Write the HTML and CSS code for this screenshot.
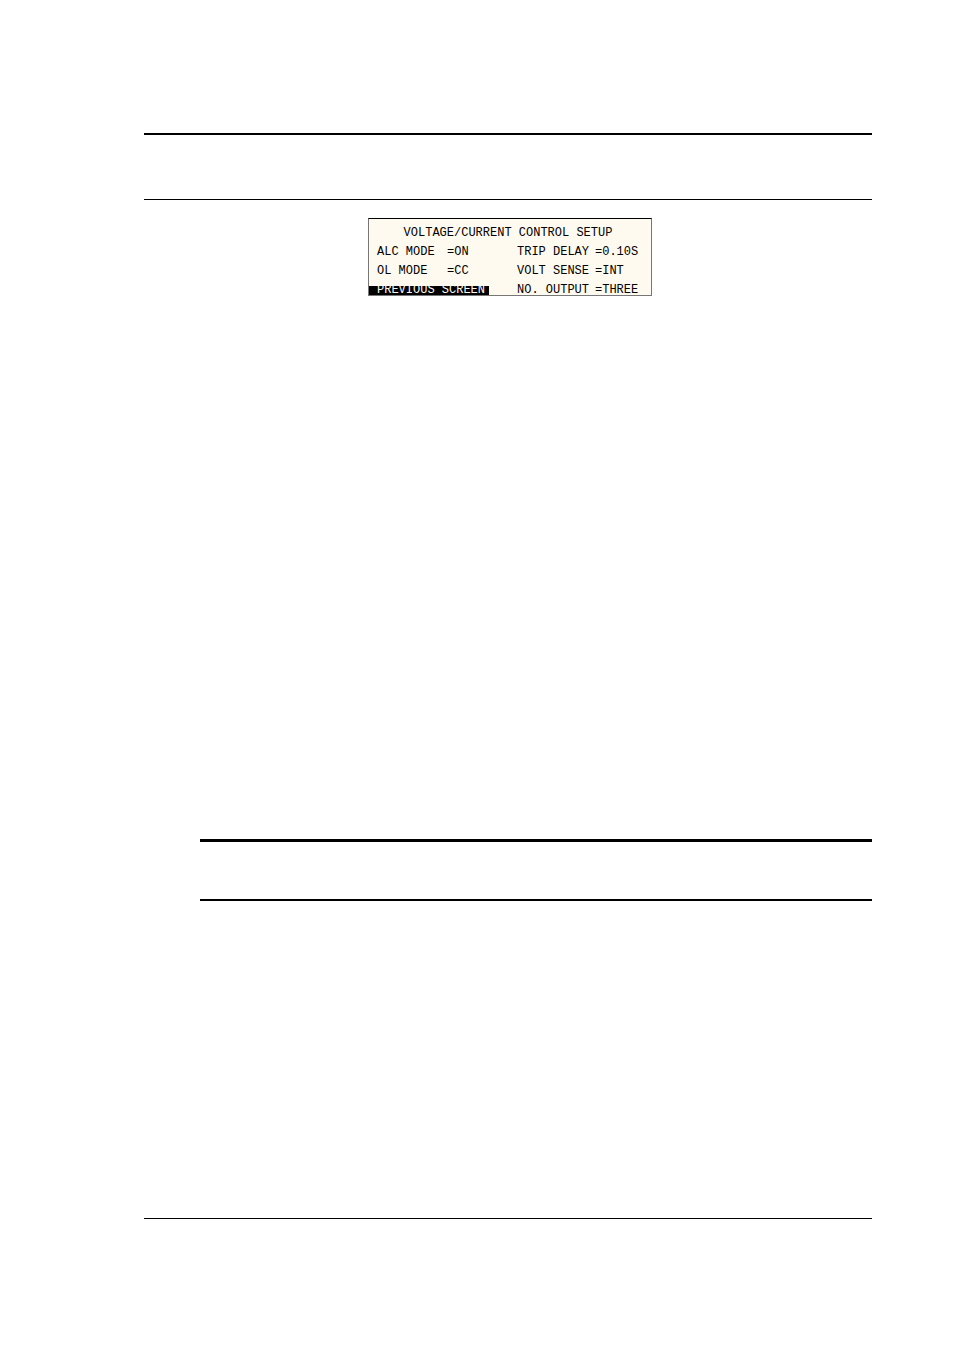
FILE: index.html
```html
<!DOCTYPE html>
<html lang="en">
<head>
<meta charset="utf-8">
<meta name="viewport" content="width=device-width, initial-scale=1">
<title>Voltage/Current Control Setup</title>
<link rel="stylesheet" href="styles.css">
</head>
<body>
<main class="page">
  <header class="masthead"></header>
  <section class="content">
    <div class="lcd">
      <h1 class="lcd-title">VOLTAGE/CURRENT CONTROL SETUP</h1>
      <div class="lcd-row">
        <span>ALC MODE</span><span>=ON</span><span>TRIP DELAY</span><span>=0.10S</span>
      </div>
      <div class="lcd-row">
        <span>OL MODE</span><span>=CC</span><span>VOLT SENSE</span><span>=INT</span>
      </div>
      <div class="lcd-row lcd-last">
        <button class="lcd-button" type="button">PREVIOUS SCREEN</button><span>NO. OUTPUT</span><span>=THREE</span>
      </div>
    </div>
  </section>
  <section class="note"></section>
  <footer class="footer"></footer>
</main>
</body>
</html>
```
FILE: styles.css
```css
* {
  box-sizing: border-box;
}

body {
  margin: 0;
  background: #fff;
  color: #000;
  font-family: "Liberation Mono", monospace;
}

.page {
  padding: 133px 82px 0 144px;
}

.masthead {
  min-height: 67px;
  border-top: 2px solid #000;
  border-bottom: 1px solid #000;
}

.content {
  min-height: 639px;
  padding: 18px 0 0 4px;
}

.lcd {
  width: 284px;
  margin: 0 auto;
  padding-top: 5px;
  border: 1px solid #777;
  border-top-color: #000;
  background: #fffaf0;
  font-size: 12px;
  line-height: 19px;
  white-space: nowrap;
}

.lcd-title {
  margin: 0;
  padding-right: 4px;
  font-size: 12px;
  font-weight: 400;
  text-align: center;
}

.lcd-row {
  display: grid;
  grid-template-columns: 70px 70px 78px 1fr;
  padding-left: 8px;
}

.lcd-last {
  margin-top: 5px;
  line-height: 9px;
}

.lcd-button {
  grid-column: span 2;
  justify-self: start;
  width: 120px;
  height: 9px;
  margin: 0 0 0 -8px;
  padding: 0 0 0 8px;
  border: 0;
  background: #000;
  color: #fffaf0;
  font: inherit;
  text-align: left;
}

.note {
  min-height: 62px;
  margin-left: 56px;
  border-top: 3px solid #000;
  border-bottom: 2px solid #000;
}

.footer {
  min-height: 100px;
  margin-top: 317px;
  border-top: 1px solid #000;
}
```
